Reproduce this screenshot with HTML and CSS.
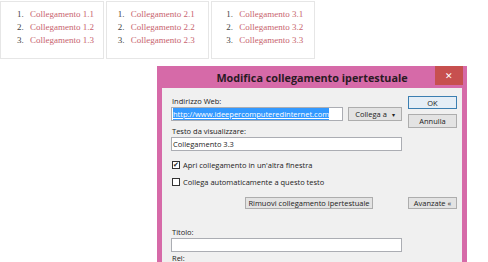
FILE: index.html
```html
<!DOCTYPE html>
<html lang="it">
<head>
  <meta charset="UTF-8" />
  <title>Modifica collegamento ipertestuale</title>
  <link rel="stylesheet" href="styles.css">
</head>
<body>

<div class="links">
  <ol class="col">
    <li><span class="num">1.</span><a href="#">Collegamento 1.1</a></li>
    <li><span class="num">2.</span><a href="#">Collegamento 1.2</a></li>
    <li><span class="num">3.</span><a href="#">Collegamento 1.3</a></li>
  </ol>
  <ol class="col">
    <li><span class="num">1.</span><a href="#">Collegamento 2.1</a></li>
    <li><span class="num">2.</span><a href="#">Collegamento 2.2</a></li>
    <li><span class="num">3.</span><a href="#">Collegamento 2.3</a></li>
  </ol>
  <ol class="col">
    <li><span class="num">1.</span><a href="#">Collegamento 3.1</a></li>
    <li><span class="num">2.</span><a href="#">Collegamento 3.2</a></li>
    <li><span class="num">3.</span><a href="#">Collegamento 3.3</a></li>
  </ol>
</div>

<div class="dialog">
  <div class="titlebar">
    <span class="title">Modifica collegamento ipertestuale</span>
    <span class="close">&#x2715;</span>
  </div>

  <div class="content">
    <div class="top">
      <div class="fields">
        <label class="lbl">Indirizzo Web:</label>
        <div class="url-row">
          <div class="input url"><span class="sel">http://www.ideepercomputeredinternet.com</span></div>
          <button type="button" class="btn collega">Collega a <span class="arrow">&#9662;</span></button>
        </div>
        <label class="lbl second">Testo da visualizzare:</label>
        <div class="input">Collegamento 3.3</div>
      </div>
      <div class="side">
        <button type="button" class="btn ok">OK</button>
        <button type="button" class="btn annulla">Annulla</button>
      </div>
    </div>

    <div class="check first"><span class="box checked">&#10004;</span>Apri collegamento in un'altra finestra</div>
    <div class="check"><span class="box"></span>Collega automaticamente a questo testo</div>

    <div class="actions">
      <button type="button" class="btn rimuovi">Rimuovi collegamento ipertestuale</button>
      <button type="button" class="btn avanzate">Avanzate &laquo;</button>
    </div>

    <label class="lbl titolo">Titolo:</label>
    <div class="input wide"></div>
    <label class="lbl rel">Rel:</label>
  </div>
</div>

</body>
</html>
```

FILE: styles.css
```css
*,
*::before,
*::after {
  box-sizing: border-box;
  margin: 0;
  padding: 0;
}

body {
  width: 488px;
  height: 262px;
  overflow: hidden;
  background: #fff;
  font-family: "Open Sans", "Noto Sans", sans-serif;
  color: #222;
}

/* elenco link in alto */
.links {
  display: flex;
  gap: 2px;
  margin-top: 1px;
  width: 315px;
}

.col {
  list-style: none;
  width: 104px;
  height: 58px;
  border: 1px solid #e6e6e6;
  padding: 6px 0 0 16px;
  font-family: "Liberation Serif", serif;
  font-size: 9px;
  line-height: 13px;
}

.col + .col { width: 104px; padding-left: 11px; }
.col:last-child { padding-left: 14px; }

.col li {
  display: flex;
}

.num {
  width: 13px;
  color: #444;
}

.col a {
  color: #c8646e;
  text-decoration: none;
}

/* finestra */
.dialog {
  margin: 7px 0 0 157px;
  width: 310px;
  height: 200px;
  background: #d66aa8;
  padding: 0 5px;
}

.titlebar {
  display: grid;
  height: 22px;
}

.title,
.close {
  grid-area: 1 / 1;
}

.title {
  justify-self: center;
  align-self: center;
  font-size: 10.8px;
  font-weight: bold;
  color: #2a1a24;
  margin-top: 1px;
}

.close {
  justify-self: end;
  width: 28px;
  height: 19px;
  margin-right: -1px;
  background: #c7504f;
  color: #fff;
  font-size: 9px;
  display: flex;
  align-items: center;
  justify-content: center;
}

.content {
  background: #f0f0f0;
  height: 178px;
  padding: 8px 5px 0 9px;
  font-size: 7.5px;
}

.top {
  display: flex;
}

.fields {
  width: 231px;
}

.side {
  margin-left: auto;
  width: 49px;
  display: flex;
  flex-direction: column;
  gap: 5px;
}

.lbl {
  display: block;
  height: 11px;
  line-height: 11px;
  padding-left: 1px;
}

.lbl.second { margin-top: 5px; }

.url-row {
  display: flex;
  gap: 5px;
}

.input {
  height: 14px;
  background: #fff;
  border: 1px solid #abadb3;
  line-height: 12px;
  padding-left: 1px;
  white-space: nowrap;
  overflow: hidden;
}

.input.url { width: 172px; }

.sel {
  background: #3399ff;
  color: #fff;
  text-decoration: underline;
  padding: 1px 0;
}

.btn {
  height: 14px;
  font-family: inherit;
  font-size: 7.5px;
  color: #222;
  background: #e3e3e3;
  border: 1px solid #adadad;
  line-height: 12px;
}

.collega { width: 54px; }
.arrow { font-size: 6px; margin-left: 3px; }

.ok {
  height: 13px;
  border-color: #3c7fb1;
  background: #e5eef6;
}

.check {
  display: flex;
  align-items: center;
  height: 12px;
  margin-top: 5px;
  padding-left: 1px;
}

.check.first { margin-top: 8px; }

.box {
  width: 8px;
  height: 8px;
  border: 1px solid #333;
  background: #fff;
  margin-right: 3px;
  font-size: 7px;
  line-height: 6px;
  text-align: center;
}

.actions {
  display: flex;
  justify-content: flex-end;
  gap: 35px;
  margin-top: 9px;
}

.btn.rimuovi { width: 128px; height: 12px; line-height: 10px; }
.btn.avanzate { width: 49px; height: 12px; line-height: 10px; }

.lbl.titolo { margin-top: 18px; }
.input.wide { width: 231px; }
.lbl.rel { margin-top: 1px; }
```
